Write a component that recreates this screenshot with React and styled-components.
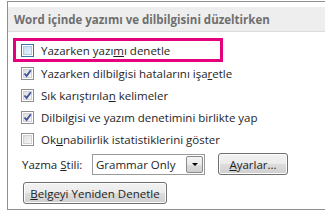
import React from 'react';
import styled, { createGlobalStyle } from 'styled-components';

const Global = createGlobalStyle`
  html, body { margin: 0; padding: 0; background: #fff; overflow: hidden; }
  body { font-family: "Open Sans", "Noto Sans", sans-serif; color: #1e1e1e; }
  #root { width: 325px; height: 213px; overflow: hidden; }
`;

const Frame = styled.div`
  box-sizing: border-box;
  margin: 1px 0 0 7px;
  width: 400px;
  height: 209px;
  border: 1px solid #8f8f8f;
  border-right: none;
  padding-top: 5px;
`;

const Header = styled.div`
  box-sizing: border-box;
  height: 25px;
  background: #eeeeee;
  border-bottom: 1px solid #dcdcdc;
  padding-left: 6px;
  display: flex;
  align-items: center;
  font-weight: 700;
  font-size: 11.5px;
  color: #6f6f6f;
  letter-spacing: 0;
`;

const List = styled.div`
  display: flex;
  flex-direction: column;
  padding: 6px 0 0 5px;
`;

const Row = styled.div`
  box-sizing: border-box;
  display: flex;
  align-items: center;
  gap: 7px;
  height: ${p => (p.$focus ? 24 : 22)}px;
  width: ${p => (p.$focus ? '210px' : 'auto')};
  padding-left: ${p => (p.$focus ? 5 : 8)}px;
  border: ${p => (p.$focus ? '3px solid #e5007d' : 'none')};
  font-size: 11.5px;
  white-space: nowrap;
`;

const Box = styled.span`
  box-sizing: border-box;
  flex: none;
  width: 13px;
  height: 13px;
  border: 1px solid ${p => (p.$focus ? '#3b73a4' : '#8e8f8f')};
  padding: 1px;
  background: #fff;
  display: flex;
  & > span {
    flex: 1;
    position: relative;
    border: 1px solid ${p => (p.$focus ? '#a9cbe8' : '#d2d2d2')};
    background: ${p =>
      p.$focus
        ? 'linear-gradient(135deg, #c4def5 0%, #e6f2fb 100%)'
        : 'linear-gradient(135deg, #dedede 0%, #f7f7f7 100%)'};
  }
  svg { position: absolute; left: -2px; top: -2px; }
`;

const Check = ({ checked, focus }) => (
  <Box $focus={focus}>
    <span>
      {checked && (
        <svg width="11" height="11" viewBox="0 0 11 11">
          <path d="M2.5 5.5 L4.6 8 L8.8 2.2" fill="none" stroke="#3e54a0" strokeWidth="1.9" />
        </svg>
      )}
    </span>
  </Box>
);

const StyleRow = styled.div`
  display: flex;
  align-items: center;
  padding: 3px 0 0 14px;
  font-size: 11.5px;
`;

const Label = styled.span`
  width: 70px;
  white-space: nowrap;
`;

const Select = styled.div`
  box-sizing: border-box;
  width: 113px;
  height: 21px;
  border: 1px solid #9a9a9a;
  display: flex;
  align-items: stretch;
  background: #fff;
`;

const SelectText = styled.span`
  flex: 1;
  padding-left: 3px;
  display: flex;
  align-items: center;
  font-size: 11.5px;
`;

const Arrow = styled.span`
  box-sizing: border-box;
  width: 17px;
  margin: 1px;
  border: 1px solid #8a8a8a;
  border-radius: 2px;
  background: linear-gradient(#f3f3f3 0%, #ebebeb 50%, #dddddd 51%, #cfcfcf 100%);
  display: flex;
  align-items: center;
  justify-content: center;
  &::after {
    content: '';
    border-left: 3px solid transparent;
    border-right: 3px solid transparent;
    border-top: 3px solid #000;
  }
`;

const Button = styled.button`
  box-sizing: border-box;
  width: ${p => p.$w}px;
  height: 22px;
  margin-left: ${p => p.$ml || 0}px;
  border: 1px solid #707070;
  border-radius: 3px;
  box-shadow: inset 0 0 0 1px #fcfcfc;
  background: linear-gradient(#f2f2f2 0%, #ebebeb 50%, #dddddd 51%, #cfcfcf 100%);
  font-family: inherit;
  font-size: 11.5px;
  color: #1e1e1e;
  padding: 0;
  white-space: nowrap;
`;

const ButtonRow = styled.div`
  display: flex;
  padding: 7px 0 0 15px;
`;

const rows = [
  { text: <>Yazarken dilbilgisi hatalarını işa<u>r</u>etle</>, checked: true },
  { text: <>Sık karıştırıla<u>n</u> kelimeler</>, checked: true },
  { text: <>Dilbil<u>g</u>isi ve yazım denetimini birlikte yap</>, checked: true },
  { text: <>Ok<u>u</u>nabilirlik istatistiklerini göster</>, checked: false },
];

export default function App() {
  return (
    <>
      <Global />
      <Frame>
        <Header>Word içinde yazımı ve dilbilgisini düzeltirken</Header>
        <List>
          <Row $focus>
            <Check focus />
            <span>Yazarken yazı<u>m</u>ı denetle</span>
          </Row>
          {rows.map((r, i) => (
            <Row key={i}>
              <Check checked={r.checked} />
              <span>{r.text}</span>
            </Row>
          ))}
        </List>
        <StyleRow>
          <Label>Yazma <u>S</u>tili:</Label>
          <Select>
            <SelectText>Grammar Only</SelectText>
            <Arrow />
          </Select>
          <Button $w={70} $ml={13}><u>A</u>yarlar...</Button>
        </StyleRow>
        <ButtonRow>
          <Button $w={144}><u>B</u>elgeyi Yeniden Denetle</Button>
        </ButtonRow>
      </Frame>
    </>
  );
}
